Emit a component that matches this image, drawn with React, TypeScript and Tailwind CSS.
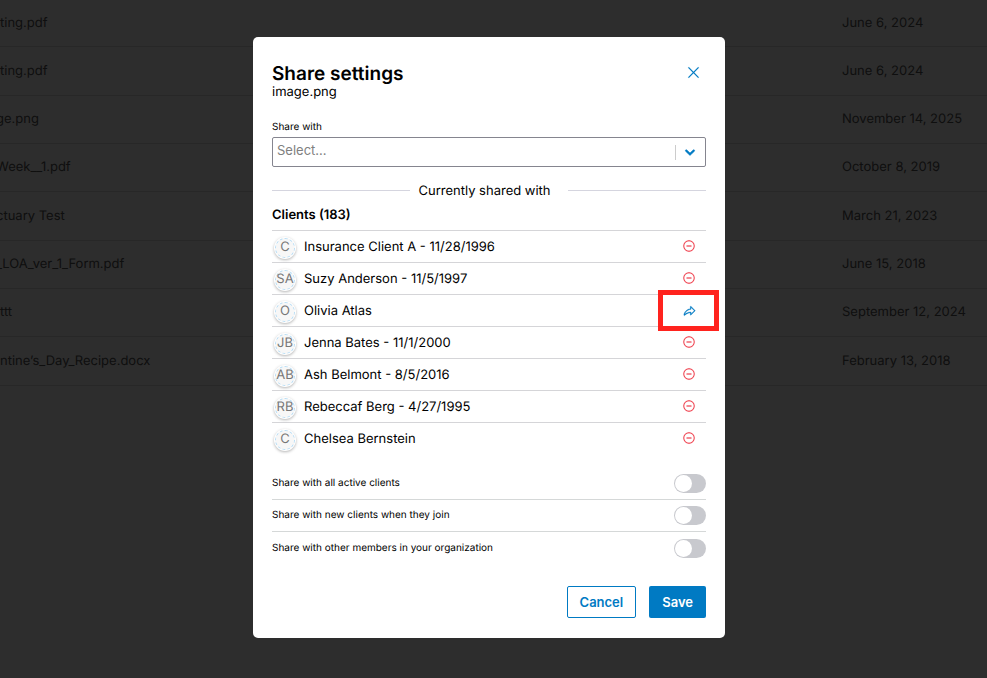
import { useState } from 'react';
import { PiMinusCircle, PiShareFat, PiX } from 'react-icons/pi';

type Client = {
  initials: string;
  name: string;
  removed?: boolean;
};

const files = [
  { name: 'ting.pdf', date: 'June 6, 2024' },
  { name: 'ting.pdf', date: 'June 6, 2024' },
  { name: 'ge.png', date: 'November 14, 2025', clipped: true },
  { name: 'Week__1.pdf', date: 'October 8, 2019', clipped: true },
  { name: 'ctuary Test', date: 'March 21, 2023', clipped: true },
  { name: '_LOA_ver_1_Form.pdf', date: 'June 15, 2018', clipped: true },
  { name: 'ttt', date: 'September 12, 2024' },
  { name: 'ntine’s_Day_Recipe.docx', date: 'February 13, 2018' },
];

const initialClients: Client[] = [
  { initials: 'C', name: 'Insurance Client A - 11/28/1996' },
  { initials: 'SA', name: 'Suzy Anderson - 11/5/1997' },
  { initials: 'O', name: 'Olivia Atlas', removed: true },
  { initials: 'JB', name: 'Jenna Bates - 11/1/2000' },
  { initials: 'AB', name: 'Ash Belmont - 8/5/2016' },
  { initials: 'RB', name: 'Rebeccaf Berg - 4/27/1995' },
  { initials: 'C', name: 'Chelsea Bernstein' },
];

const options = [
  { id: 'all-active', label: 'Share with all active clients' },
  { id: 'new-clients', label: 'Share with new clients when they join' },
  { id: 'org-members', label: 'Share with other members in your organization' },
];

function FileTable() {
  return (
    <table className="w-full table-fixed border-separate border-spacing-0 text-[13px] leading-4 text-[#555]">
      <tbody>
        {files.map((file, i) => (
          <tr key={i} className="h-12 first:h-[47px] nth-[3n+2]:h-[49px]">
            <td className="overflow-hidden whitespace-nowrap border-b border-[#dcdcdc] p-0 pb-px">
              <span className={file.clipped ? '-ml-1' : ''}>{file.name}</span>
            </td>
            <td className="w-[145px] whitespace-nowrap border-b border-[#dcdcdc] p-0 pb-px">{file.date}</td>
          </tr>
        ))}
      </tbody>
    </table>
  );
}

function Avatar({ initials }: { initials: string }) {
  return (
    <span className="flex size-[22px] shrink-0 rounded-full bg-white p-px shadow-[0_1px_3px_rgba(0,0,0,0.3)]">
      <span className="flex size-5 items-center justify-center rounded-full border border-dashed border-[#b5dcf5] bg-[#f7f7f7] pb-0.5 text-[13px] leading-4 text-[#777]">
        {initials}
      </span>
    </span>
  );
}

function ClientRow({ client, onToggle }: { client: Client; onToggle: () => void }) {
  return (
    <li className="flex h-8 items-center border-t border-[#d5d5d8] pl-0.5">
      <div className="mt-0.5">
        <Avatar initials={client.initials} />
      </div>
      <span className="ml-2 flex-1 pt-0.5">{client.name}</span>
      <div className="relative mr-2.5 flex size-[15px] justify-end">
        <button
          type="button"
          onClick={onToggle}
          aria-label={client.removed ? `Share with ${client.name}` : `Remove ${client.name}`}
          className={client.removed ? 'self-end text-[#007ac3]' : 'self-start text-[#ee3340]'}
        >
          {client.removed ? (
            <PiShareFat size={13} stroke="currentColor" strokeWidth={6} />
          ) : (
            <PiMinusCircle size={14} stroke="currentColor" strokeWidth={2} />
          )}
        </button>
        {client.removed && (
          <span className="pointer-events-none absolute -inset-x-[23px] -inset-y-[13px] border-[5px] border-[#ff231e]" />
        )}
      </div>
    </li>
  );
}

function ShareSelect() {
  return (
    <div className="mt-[3px] grid items-center">
      <select
        id="share-with"
        defaultValue=""
        className="col-start-1 row-start-1 h-[30px] w-full appearance-none rounded-xs border border-[#85858f] bg-white pb-0.5 pl-1 text-[13px] text-[#808080] outline-none"
      >
        <option value="">Select...</option>
      </select>
      <div className="pointer-events-none col-start-1 row-start-1 flex items-center justify-self-end">
        <span className="h-[15px] w-px bg-[#ccc]" />
        <svg viewBox="0 0 20 20" className="ml-1.5 mr-2 size-4 fill-[#007ac3] stroke-[#007ac3]" strokeWidth="0.7">
          <path d="M4.516 7.548c.436-.446 1.043-.481 1.576 0L10 11.295l3.908-3.747c.533-.481 1.141-.446 1.574 0 .436.445.408 1.197 0 1.615-.406.418-4.695 4.502-4.695 4.502-.217.223-.502.335-.787.335s-.57-.112-.789-.335c0 0-4.287-4.084-4.695-4.502s-.436-1.17 0-1.615z" />
        </svg>
      </div>
    </div>
  );
}

function App() {
  const [clients, setClients] = useState(initialClients);

  const toggleClient = (index: number) => {
    setClients(clients.map((c, i) => (i === index ? { ...c, removed: !c.removed } : c)));
  };

  return (
    <div className="min-h-screen bg-white font-[Inter,sans-serif] [text-rendering:geometricPrecision]">
      <FileTable />

      <div className="fixed inset-0 flex items-center justify-center bg-black/[0.825] pb-[3px] pr-[9px]">
        <div
          role="dialog"
          aria-labelledby="share-title"
          className="w-full max-w-[472px] rounded-[5px] bg-white px-[19px] pb-5 pt-[26px] text-[13px] text-black"
        >
          <div className="flex items-start justify-between">
            <div>
              <h1 id="share-title" className="text-[19px] font-semibold leading-[22px]">Share settings</h1>
              <p className="leading-[14px]">image.png</p>
            </div>
            <button type="button" aria-label="Close" className="mr-1 mt-px text-[#007ac3]">
              <PiX size={17} stroke="currentColor" strokeWidth={2} />
            </button>
          </div>

          <label htmlFor="share-with" className="mt-[21px] block text-[10px] leading-[14px]">
            Share with
          </label>
          <ShareSelect />

          <div className="mt-3 flex items-center leading-5">
            <span className="h-px flex-1 bg-[#d5d5df]" />
            <span className="pl-2 pr-[17px] pt-0.5">Currently shared with</span>
            <span className="h-px flex-1 bg-[#d5d5df]" />
          </div>

          <h2 className="mb-[5px] mt-1 font-semibold leading-5">Clients (183)</h2>
          <ul>
            {clients.map((client, i) => (
              <ClientRow key={i} client={client} onToggle={() => toggleClient(i)} />
            ))}
          </ul>

          <div className="mt-3.5">
            {options.map(option => (
              <div
                key={option.id}
                className="flex h-8 items-center justify-between border-b border-[#d5d8d8] last:border-b-0"
              >
                <label htmlFor={option.id} className="pb-px text-[10px] leading-[14px]">{option.label}</label>
                <input
                  id={option.id}
                  type="checkbox"
                  className="flex h-[19px] w-8 appearance-none items-center rounded-full bg-[#c8c9ce] px-px before:size-[17px] before:rounded-full before:bg-white checked:justify-end checked:bg-[#007ac3]"
                />
              </div>
            ))}
          </div>

          <div className="mt-[22px] flex justify-end gap-[13px] font-semibold">
            <button type="button" className="h-8 rounded-xs border border-[#007ac3] px-3 pt-0.5 text-[#007ac3]">
              Cancel
            </button>
            <button type="button" className="h-8 rounded-xs bg-[#007ac3] px-[13px] pt-0.5 text-white">
              Save
            </button>
          </div>
        </div>
      </div>
    </div>
  );
}

export default App;
